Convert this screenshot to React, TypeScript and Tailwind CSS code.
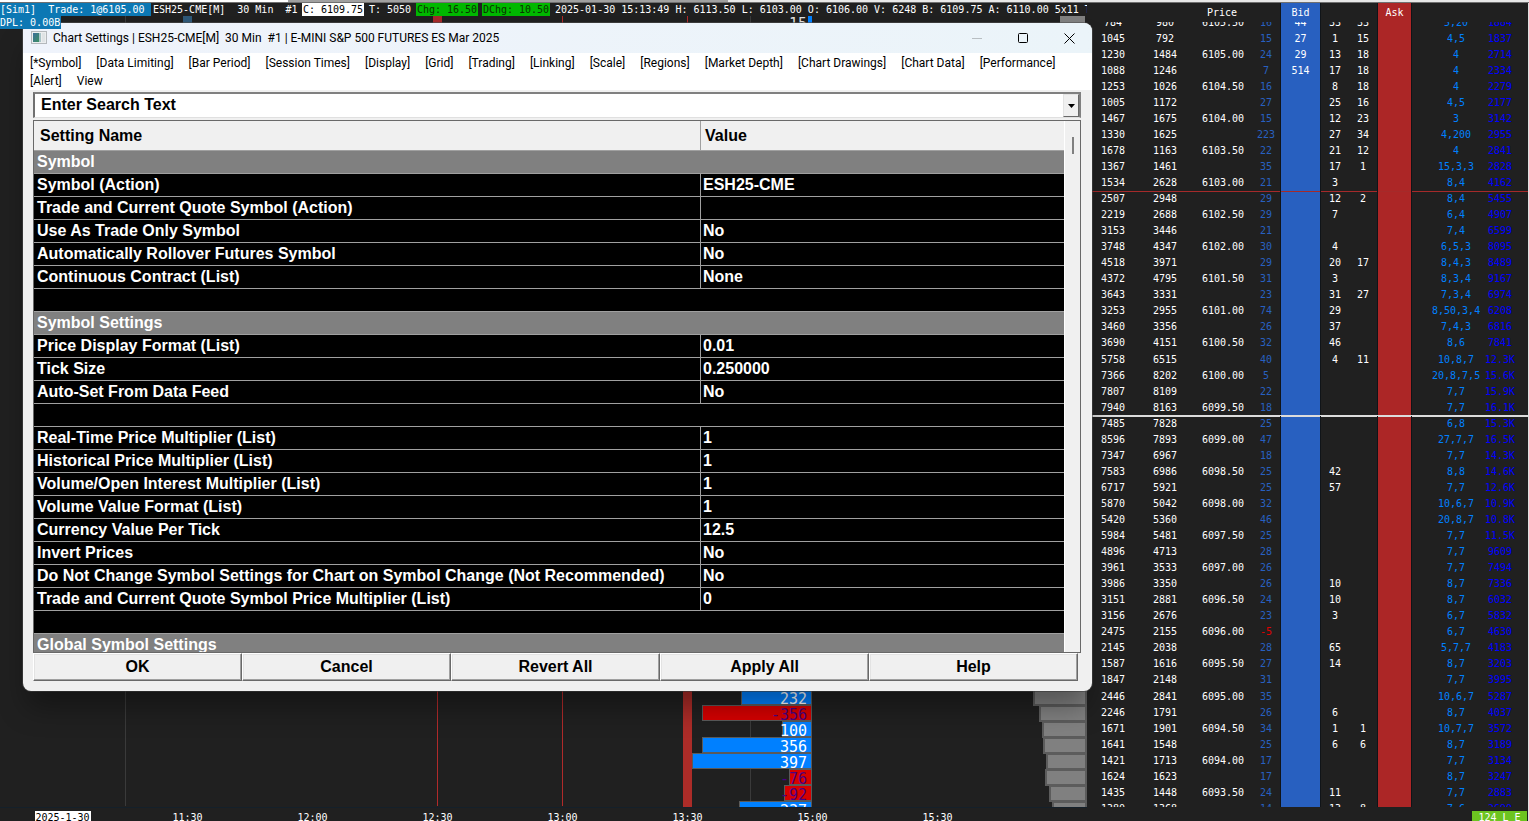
import React from "react";

type Level = [string, string, string, string, string, string, string, string, string];

// volume A, volume B, price, delta, bid size, pull 1, pull 2, order list, total
const levels: Level[] = [
  ["784", "980", "6105.50", "16", "44", "33", "33", "5,20", "1884"],
  ["1045", "792", "", "15", "27", "1", "15", "4,5", "1837"],
  ["1230", "1484", "6105.00", "24", "29", "13", "18", "4", "2714"],
  ["1088", "1246", "", "7", "514", "17", "18", "4", "2334"],
  ["1253", "1026", "6104.50", "16", "", "8", "18", "4", "2279"],
  ["1005", "1172", "", "27", "", "25", "16", "4,5", "2177"],
  ["1467", "1675", "6104.00", "15", "", "12", "23", "3", "3142"],
  ["1330", "1625", "", "223", "", "27", "34", "4,200", "2955"],
  ["1678", "1163", "6103.50", "22", "", "21", "12", "4", "2841"],
  ["1367", "1461", "", "35", "", "17", "1", "15,3,3", "2828"],
  ["1534", "2628", "6103.00", "21", "", "3", "", "8,4", "4162"],
  ["2507", "2948", "", "29", "", "12", "2", "8,4", "5455"],
  ["2219", "2688", "6102.50", "29", "", "7", "", "6,4", "4907"],
  ["3153", "3446", "", "21", "", "", "", "7,4", "6599"],
  ["3748", "4347", "6102.00", "30", "", "4", "", "6,5,3", "8095"],
  ["4518", "3971", "", "29", "", "20", "17", "8,4,3", "8489"],
  ["4372", "4795", "6101.50", "31", "", "3", "", "8,3,4", "9167"],
  ["3643", "3331", "", "23", "", "31", "27", "7,3,4", "6974"],
  ["3253", "2955", "6101.00", "74", "", "29", "", "8,50,3,4", "6208"],
  ["3460", "3356", "", "26", "", "37", "", "7,4,3", "6816"],
  ["3690", "4151", "6100.50", "32", "", "46", "", "8,6", "7841"],
  ["5758", "6515", "", "40", "", "4", "11", "10,8,7", "12.3K"],
  ["7366", "8202", "6100.00", "5", "", "", "", "20,8,7,5", "15.6K"],
  ["7807", "8109", "", "22", "", "", "", "7,7", "15.9K"],
  ["7940", "8163", "6099.50", "18", "", "", "", "7,7", "16.1K"],
  ["7485", "7828", "", "25", "", "", "", "6,8", "15.3K"],
  ["8596", "7893", "6099.00", "47", "", "", "", "27,7,7", "16.5K"],
  ["7347", "6967", "", "18", "", "", "", "7,7", "14.3K"],
  ["7583", "6986", "6098.50", "25", "", "42", "", "8,8", "14.6K"],
  ["6717", "5921", "", "25", "", "57", "", "7,7", "12.6K"],
  ["5870", "5042", "6098.00", "32", "", "", "", "10,6,7", "10.9K"],
  ["5420", "5360", "", "46", "", "", "", "20,8,7", "10.8K"],
  ["5984", "5481", "6097.50", "25", "", "", "", "7,7", "11.5K"],
  ["4896", "4713", "", "28", "", "", "", "7,7", "9609"],
  ["3961", "3533", "6097.00", "26", "", "", "", "7,7", "7494"],
  ["3986", "3350", "", "26", "", "10", "", "8,7", "7336"],
  ["3151", "2881", "6096.50", "24", "", "10", "", "8,7", "6032"],
  ["3156", "2676", "", "23", "", "3", "", "6,7", "5832"],
  ["2475", "2155", "6096.00", "-5", "", "", "", "6,7", "4630"],
  ["2145", "2038", "", "28", "", "65", "", "5,7,7", "4183"],
  ["1587", "1616", "6095.50", "27", "", "14", "", "8,7", "3203"],
  ["1847", "2148", "", "31", "", "", "", "7,7", "3995"],
  ["2446", "2841", "6095.00", "35", "", "", "", "10,6,7", "5287"],
  ["2246", "1791", "", "26", "", "6", "", "8,7", "4037"],
  ["1671", "1901", "6094.50", "34", "", "1", "1", "10,7,7", "3572"],
  ["1641", "1548", "", "25", "", "6", "6", "8,7", "3189"],
  ["1421", "1713", "6094.00", "17", "", "", "", "7,7", "3134"],
  ["1624", "1623", "", "17", "", "", "", "8,7", "3247"],
  ["1435", "1448", "6093.50", "24", "", "11", "", "7,7", "2883"],
  ["1380", "1368", "", "14", "", "13", "8", "7,6", "2690"],
];

type Setting = { kind: "group" | "row" | "blank"; name?: string; value?: string };

const settings: Setting[] = [
  { kind: "group", name: "Symbol" },
  { kind: "row", name: "Symbol (Action)", value: "ESH25-CME" },
  { kind: "row", name: "Trade and Current Quote Symbol (Action)", value: "" },
  { kind: "row", name: "Use As Trade Only Symbol", value: "No" },
  { kind: "row", name: "Automatically Rollover Futures Symbol", value: "No" },
  { kind: "row", name: "Continuous Contract (List)", value: "None" },
  { kind: "blank" },
  { kind: "group", name: "Symbol Settings" },
  { kind: "row", name: "Price Display Format (List)", value: "0.01" },
  { kind: "row", name: "Tick Size", value: "0.250000" },
  { kind: "row", name: "Auto-Set From Data Feed", value: "No" },
  { kind: "blank" },
  { kind: "row", name: "Real-Time Price Multiplier (List)", value: "1" },
  { kind: "row", name: "Historical Price Multiplier (List)", value: "1" },
  { kind: "row", name: "Volume/Open Interest Multiplier (List)", value: "1" },
  { kind: "row", name: "Volume Value Format (List)", value: "1" },
  { kind: "row", name: "Currency Value Per Tick", value: "12.5" },
  { kind: "row", name: "Invert Prices", value: "No" },
  { kind: "row", name: "Do Not Change Symbol Settings for Chart on Symbol Change (Not Recommended)", value: "No" },
  { kind: "row", name: "Trade and Current Quote Symbol Price Multiplier (List)", value: "0" },
  { kind: "blank" },
  { kind: "group", name: "Global Symbol Settings" },
];

const menuItems = [
  "[*Symbol]", "[Data Limiting]", "[Bar Period]", "[Session Times]", "[Display]", "[Grid]",
  "[Trading]", "[Linking]", "[Scale]", "[Regions]", "[Market Depth]", "[Chart Drawings]",
  "[Chart Data]", "[Performance]", "[Alert]", "View",
];

const times = ["11:30", "12:00", "12:30", "13:00", "13:30", "15:00", "15:30"];

const deltaBars = [
  { left: 741, label: "232" },
  { left: 702, label: "-356" },
  { left: 782, label: "100" },
  { left: 702, label: "356" },
  { left: 692, label: "397" },
  { left: 789, label: "-76" },
  { left: 784, label: "-92" },
  { left: 739, label: "237" },
];

const profileWidths = [53, 47, 44, 43, 40, 41, 37, 34];

function StatusBar() {
  return (
    <header className="whitespace-pre text-[10px] leading-[13px] text-white">
      <div className="flex h-[13px] overflow-hidden">
        <span className="w-[151px] shrink-0 bg-[#0c78b4]">[Sim1]  Trade: 1@6105.00</span>
        <span className="w-[151px] shrink-0 pl-[2px]">ESH25-CME[M]  30 Min  #1</span>
        <span className="w-[62px] shrink-0 bg-white text-center text-black">C: 6109.75</span>
        <span className="w-[52px] shrink-0 pl-[5px]">T: 5050</span>
        <span className="w-[62px] shrink-0 bg-[#00b800] text-center text-[#0a3300]">Chg: 16.50</span>
        <span className="ml-1 w-[68px] shrink-0 bg-[#00b800] text-center text-[#0a3300]">DChg: 10.50</span>
        <span className="pl-[5px]">
          2025-01-30 15:13:49 H: 6113.50 L: 6103.00 O: 6106.00 V: 6248 B: 6109.75 A: 6110.00 5x11 T
        </span>
      </div>
    </header>
  );
}

function ChartPlot() {
  return (
    <div className="relative flex min-h-0 flex-1 justify-end overflow-hidden">
      <span className="absolute top-0 left-0 z-10 h-[13px] w-[61px] bg-[#0c78b4] text-[10px] leading-[13px] text-white">
        DPL: 0.00B
      </span>
      <svg className="absolute inset-0 h-full w-full" aria-hidden="true">
        <path d="M125.5 0V790M750.5 0V790" stroke="#3a3a3a" />
        <path d="M437.5 0V790M562.5 0V790M687.5 0V790" stroke="#b02a2a" />
        <rect x="183" y="0" width="9" height="14" fill="#2f5878" />
        <rect x="433" y="0" width="9" height="14" fill="#a52a2a" />
        <rect x="683" y="672" width="9" height="119" fill="#ac2c28" />
        <rect x="808" y="0" width="4" height="12" fill="#0080ff" />
        <text x="807" y="13" fontSize="15" textAnchor="end" fill="#ddd">15</text>
        {deltaBars.map((bar, i) => {
          const negative = bar.label.startsWith("-");
          const top = 673 + i * 16;
          return (
            <g key={i}>
              <rect
                x={bar.left + 0.5}
                y={top + 0.5}
                width={811 - bar.left}
                height="15"
                fill={negative ? "#d60000" : "#0080ff"}
                stroke="#5a5a5a"
              />
              <text x="807" y={top + 15} fontSize="15" textAnchor="end" fill={negative ? "#4b0082" : "#fff"}>
                {bar.label}
              </text>
            </g>
          );
        })}
      </svg>
      <svg className="relative h-full w-[60px] shrink-0" aria-hidden="true">
        <rect x="33" y="0" width="25" height="12" fill="#808080" />
        {profileWidths.map((w, i) => (
          <rect
            key={i}
            x={60 - w}
            y={674 + i * 16}
            width={w - 1}
            height="15"
            fill="#808080"
            stroke="#5c5c5c"
            strokeWidth="2"
          />
        ))}
      </svg>
    </div>
  );
}

function TimeAxis() {
  return (
    <footer className="flex h-[14px] shrink-0 overflow-hidden border-t border-[#14202a] pt-[3px] text-center text-[10px] leading-[14px] text-white">
      <div className="w-[125px] shrink-0">
        <span className="inline-block w-[56px] bg-white text-black">2025-1-30</span>
      </div>
      {times.map((t) => (
        <span key={t} className="w-[125px] shrink-0">{t}</span>
      ))}
    </footer>
  );
}

function Ladder() {
  const columns = [
    "w-[52px]", "w-[52px]", "w-[64px]", "w-[26px]", "w-[40px]",
    "w-[28px]", "w-[29px]", "w-[34px]", "w-[68px]", "w-[48px]",
  ];
  const cols = (
    <colgroup>
      {columns.map((c, i) => <col key={i} className={c} />)}
    </colgroup>
  );
  const sep = "border-r border-[#101418]";
  return (
    <section className="flex w-[442px] shrink-0 flex-col overflow-hidden border-r border-[#e0e0e0] text-[10px] text-white">
      <div className="flex min-h-0 flex-1 flex-col overflow-hidden">
        <table className="w-full shrink-0 table-fixed border-separate border-spacing-0 text-center leading-4">
          {cols}
          <thead>
            <tr className="h-[19px]">
              <th className="p-0" /><th className="p-0" />
              <th className="p-0 pr-[2px] font-normal">Price</th>
              <th className={`p-0 ${sep}`} />
              <th className={`bg-[#2860c0] p-0 font-normal ${sep}`}>Bid</th>
              <th className="p-0" />
              <th className={`p-0 ${sep}`} />
              <th className={`bg-[#ac2626] p-0 font-normal ${sep}`}>Ask</th>
              <th className="p-0" /><th className="p-0" />
            </tr>
          </thead>
        </table>
        <div className="min-h-0 flex-1 overflow-hidden">
          <table className="-mt-[7px] w-full table-fixed border-separate border-spacing-0 text-center leading-4 whitespace-nowrap">
            {cols}
            <tbody>
              {levels.map((row, i) => {
                const line =
                  i === 11
                    ? "shadow-[inset_0_1px_0_#a52a2a]"
                    : i === 25
                      ? "shadow-[inset_0_1px_0_#dcdcdc,0_-1px_0_#dcdcdc]"
                      : "";
                const extra = i === 21 || i === 42 ? "pt-px" : "pt-0";
                const cell = `h-4 px-0 pb-0 ${extra} ${line}`;
                return (
                  <tr key={i}>
                    <td className={cell}>{row[0]}</td>
                    <td className={cell}>{row[1]}</td>
                    <td className={cell}>{row[2]}</td>
                    <td className={`h-4 pr-[3px] pb-0 pl-0 ${extra} ${line} ${sep} ${row[3].startsWith("-") ? "text-[#e00000]" : "text-[#2860c0]"}`}>
                      {row[3]}
                    </td>
                    <td className={`${cell} ${sep} bg-[#2860c0]`}>{row[4]}</td>
                    <td className={cell}>{row[5]}</td>
                    <td className={`${cell} ${sep}`}>{row[6]}</td>
                    <td className={`${cell} ${sep} bg-[#ac2626]`} />
                    <td className={`h-4 pr-0 pb-0 pl-5 ${extra} ${line} text-[#0080ff]`}>{row[7]}</td>
                    <td className={`h-4 pr-2 pb-0 pl-0 ${extra} ${line} text-[#0000ff]`}>{row[8]}</td>
                  </tr>
                );
              })}
            </tbody>
          </table>
        </div>
      </div>
      <div className="flex h-[14px] shrink-0 justify-end overflow-hidden pt-1 pr-px">
        <span className="h-4 w-[55px] bg-[#6cc420] text-center leading-[14px]">124 L E</span>
      </div>
    </section>
  );
}

function WindowIcon() {
  return (
    <svg width="16" height="14" viewBox="0 0 16 14" aria-hidden="true">
      <defs>
        <linearGradient id="pane" x1="0" y1="0" x2="1" y2="1">
          <stop offset="0" stopColor="#3c6f9c" />
          <stop offset="1" stopColor="#3d8f62" />
        </linearGradient>
      </defs>
      <rect x="0.5" y="0.5" width="15" height="12" fill="#eceeef" stroke="#b4b8bc" />
      <rect x="2" y="2" width="6" height="9" fill="url(#pane)" />
      <rect x="8" y="2" width="2" height="9" fill="#a9c4c8" />
      <rect x="11" y="2" width="3" height="9" fill="#dfe3e5" />
    </svg>
  );
}

function SettingsWindow() {
  return (
    <div
      role="dialog"
      aria-label="Chart Settings"
      className="absolute top-[23px] left-[23px] flex h-[668px] w-[1069px] flex-col overflow-hidden rounded-lg bg-[#f0f0f0] text-black shadow-[0_20px_28px_-4px_rgba(0,0,0,0.35),0_0_0_1px_rgba(80,80,80,0.6)]"
    >
      <div className="flex h-[30px] shrink-0 items-center bg-linear-to-r from-[#eff3fb] to-[#ebf4f9] pl-2 font-[Roboto,'Noto_Sans',sans-serif] text-xs whitespace-pre">
        <WindowIcon />
        <h1 className="ml-[6px] flex-1">Chart Settings | ESH25-CME[M]  30 Min  #1 | E-MINI S&amp;P 500 FUTURES ES Mar 2025</h1>
        <button type="button" aria-label="Minimize" className="flex h-full w-[46px] items-center justify-center">
          <svg width="10" height="10"><path d="M0 5.5H10" stroke="#b8bec2" /></svg>
        </button>
        <button type="button" aria-label="Maximize" className="flex h-full w-[46px] items-center justify-center">
          <svg width="11" height="11"><rect x="0.5" y="0.5" width="9" height="9" rx="1" fill="none" stroke="#000" /></svg>
        </button>
        <button type="button" aria-label="Close" className="flex h-full w-[46px] items-center justify-center">
          <svg width="11" height="11"><path d="M0.5 0.5L10.5 10.5M10.5 0.5L0.5 10.5" stroke="#000" /></svg>
        </button>
      </div>
      <nav className="flex shrink-0 flex-wrap gap-x-[15px] bg-white pt-px pr-6 pl-[7px] font-[Roboto,'Noto_Sans',sans-serif] text-xs leading-[18px]">
        {menuItems.map((m) => (
          <button type="button" key={m}>{m}</button>
        ))}
      </nav>
      <div className="flex min-h-0 flex-1 flex-col pt-[2px] pr-[11px] pb-[10px] pl-[10px] font-bold">
        <div className="flex h-[26px] shrink-0 border-t-2 border-r-2 border-b border-l-2 border-t-[#808080] border-r-[#808080] border-b-[#e0e0e0] border-l-[#707070] bg-white">
          <input
            type="text"
            aria-label="Search settings"
            defaultValue="Enter Search Text"
            className="min-w-0 flex-1 bg-white pb-[2px] pl-[6px] font-bold outline-none"
          />
          <button
            type="button"
            aria-label="Search history"
            className="flex w-4 items-center justify-center border border-t-[#e3e3e3] border-r-[#696969] border-b-[#696969] border-l-[#e3e3e3] bg-[#f0f0f0]"
          >
            <svg width="7" height="4"><path d="M0 0H7L3.5 4Z" fill="#000" /></svg>
          </button>
        </div>
        <div className="mt-[2px] flex min-h-0 flex-1 overflow-hidden border border-[#696969]">
          <table className="w-full flex-1 table-fixed border-separate border-spacing-0 self-start text-left">
            <colgroup>
              <col className="w-[667px]" />
              <col />
            </colgroup>
            <thead>
              <tr className="h-[29px]">
                <th className="border-r border-[#a0a0a0] p-0 pl-[6px]">Setting Name</th>
                <th className="p-0 pl-1">Value</th>
              </tr>
            </thead>
            <tbody className="bg-black leading-[22px] text-white">
              {settings.map((s, i) => {
                if (s.kind === "group")
                  return (
                    <tr key={i}>
                      <td colSpan={2} className="h-[23px] border-t border-[#a0a0a0] bg-[#808080] p-0 pl-[3px]">{s.name}</td>
                    </tr>
                  );
                if (s.kind === "blank")
                  return (
                    <tr key={i}>
                      <td colSpan={2} className="h-[23px] border-t border-[#a0a0a0] p-0" />
                    </tr>
                  );
                return (
                  <tr key={i}>
                    <td className="h-[23px] border-t border-r border-[#a0a0a0] p-0 pl-[3px] whitespace-nowrap">{s.name}</td>
                    <td className="h-[23px] border-t border-[#a0a0a0] p-0 pl-[2px]">{s.value}</td>
                  </tr>
                );
              })}
            </tbody>
          </table>
          <div className="w-4 shrink-0 border-l border-white pt-4 pl-[7px]">
            <div className="h-[17px] w-[2px] bg-[#808080]" />
          </div>
        </div>
        <div className="flex h-7 shrink-0 pr-[3px]">
          {["OK", "Cancel", "Revert All", "Apply All", "Help"].map((label) => (
            <button
              type="button"
              key={label}
              className="flex-1 border border-t-white border-r-[#696969] border-b-[#696969] border-l-white bg-[#f0f0f0] font-bold shadow-[inset_-1px_-1px_0_#a0a0a0,inset_1px_1px_0_#e3e3e3]"
            >
              {label}
            </button>
          ))}
        </div>
      </div>
    </div>
  );
}

export default function App() {
  return (
    <div className="relative flex h-screen flex-col overflow-hidden bg-[#202020] font-['DejaVu_Sans_Mono','Liberation_Mono',monospace]">
      <div className="flex h-[3px] shrink-0 border-b border-[#707070]">
        <div className="w-[288px] bg-white" />
        <div className="w-[440px] bg-[#a0a0a0]" />
        <div className="flex-1 bg-[#e8e8e8]" />
      </div>
      <div className="flex min-h-0 flex-1">
        <main className="flex min-w-0 flex-1 flex-col overflow-hidden">
          <StatusBar />
          <ChartPlot />
          <TimeAxis />
        </main>
        <Ladder />
      </div>
      <div className="font-['Liberation_Sans',Arial,sans-serif] text-base">
        <SettingsWindow />
      </div>
    </div>
  );
}
